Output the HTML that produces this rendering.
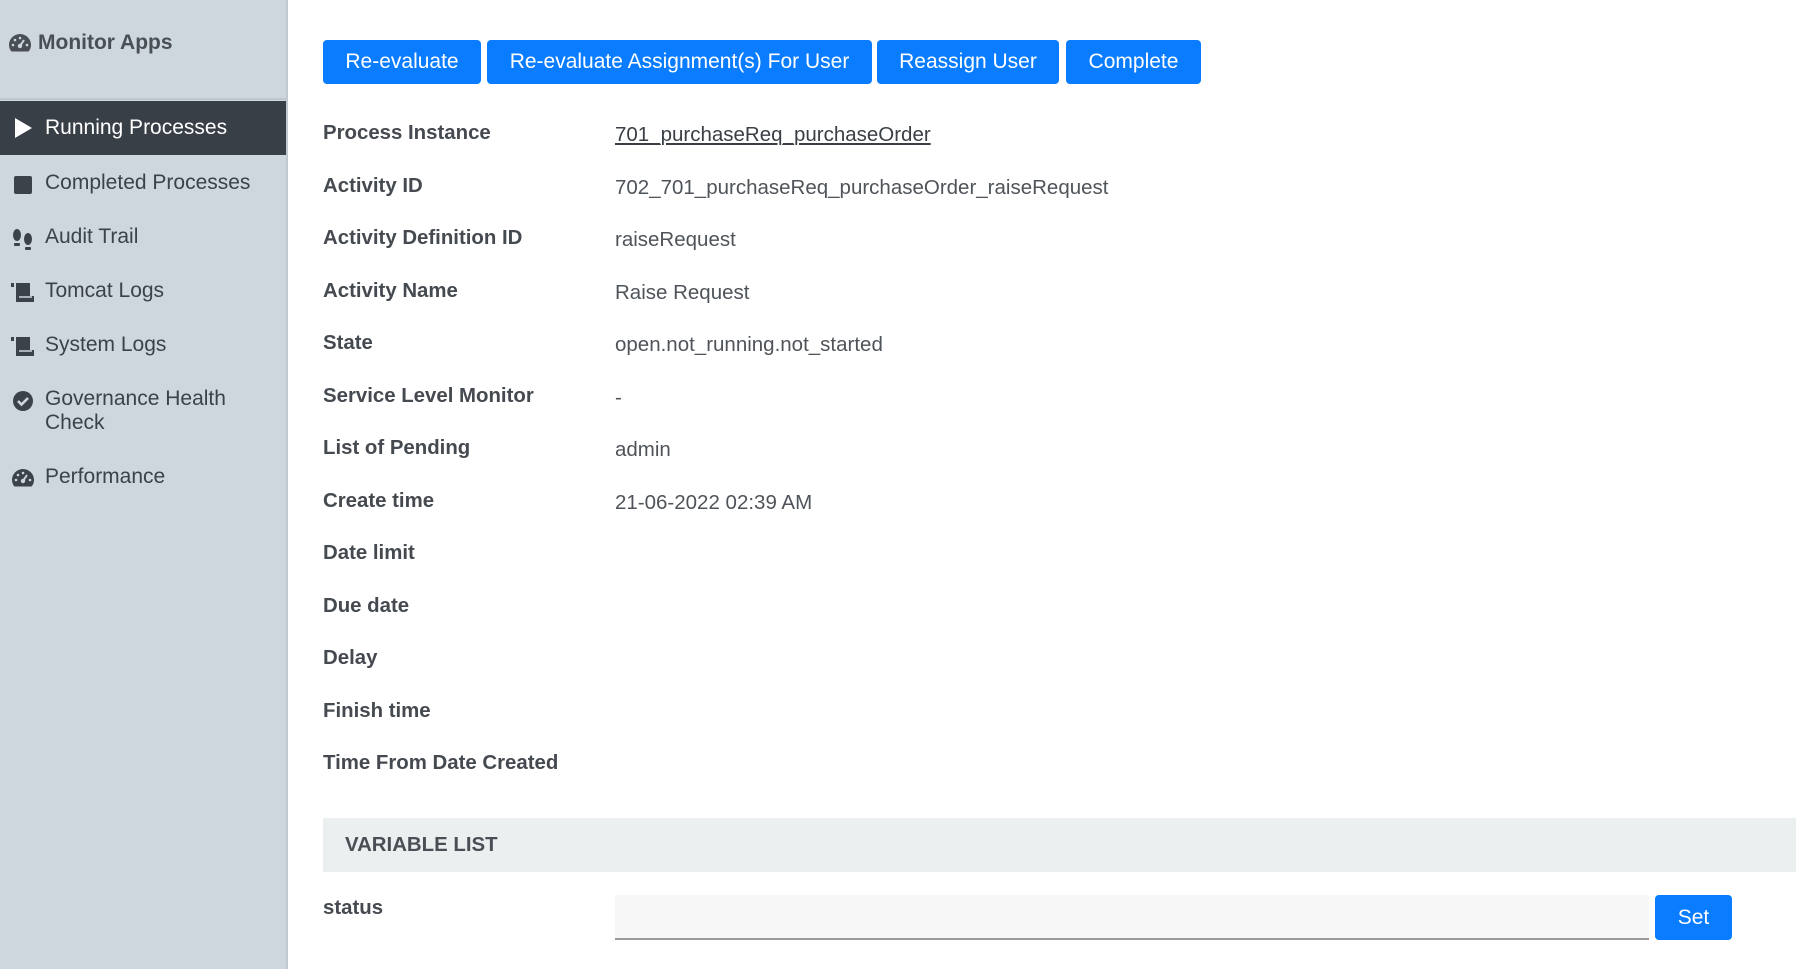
<!DOCTYPE html>
<html><head><meta charset="utf-8"><style>
*{margin:0;padding:0;box-sizing:border-box}
body{width:1796px;height:969px;overflow:hidden;font-family:"Liberation Sans",Arial,sans-serif;background:#fff;position:relative}
#side{position:absolute;left:0;top:0;width:288px;height:969px;background:#ced6de;border-right:2px solid #c2c8cf}
.brand{position:absolute;left:8px;top:31px;font-size:21px;font-weight:bold;color:#4a4f55;display:flex;align-items:center;gap:6px}
.sep{position:absolute;left:0;top:98px;width:286px;height:2px;background:#bfc6cd}
.item{position:absolute;left:0;width:286px;font-size:21px;color:#3c4249;display:flex;align-items:flex-start}
.item .ic{width:45px;display:flex;justify-content:center;padding-top:3px}
.active{background:#383f47;color:#fff;height:54px;top:101px;align-items:center}
.active .ic{padding-top:0}
.btn{position:absolute;top:40px;height:44px;background:#0a7cff;color:#fff;border-radius:4px;font-size:21px;display:flex;align-items:center;justify-content:center}
.lbl{position:absolute;left:323px;font-size:20.4px;font-weight:bold;color:#454a50}
.val{position:absolute;left:615px;font-size:20.5px;color:#4f545a}
</style></head><body>
<div id="side">
 <div class="brand"><svg width="24" height="20" viewBox="0 0 24 20"><path d="M12 1A11 11 0 0 0 1 12c0 2.6 1 5 2.5 6.5h17C22 17 23 14.6 23 12A11 11 0 0 0 12 1z" fill="#4a4f55"/><circle cx="12" cy="13" r="2.2" fill="#ced6de"/><path d="M12 13l4-6" stroke="#ced6de" stroke-width="2"/><circle cx="5" cy="12" r="1.3" fill="#ced6de"/><circle cx="7" cy="7" r="1.3" fill="#ced6de"/><circle cx="12" cy="5" r="1.3" fill="#ced6de"/><circle cx="19" cy="12" r="1.3" fill="#ced6de"/></svg>Monitor Apps</div>
 <div class="sep"></div>
 <div class="item active"><div class="ic"><svg width="20" height="22" viewBox="0 0 20 22"><path d="M2 1l17 10L2 21z" fill="#fff"/></svg></div>Running Processes</div>
 <div class="item" style="top:171px"><div class="ic"><div style="width:18px;height:18px;background:#3c4249;border-radius:2px;margin-top:2px"></div></div>Completed Processes</div>
 <div class="item" style="top:225px"><div class="ic"><svg width="24" height="24" viewBox="0 0 24 24"><ellipse cx="6" cy="7" rx="4" ry="6" fill="#3c4249"/><rect x="3" y="15" width="6" height="3" rx="1" fill="#3c4249"/><ellipse cx="17" cy="11" rx="4" ry="6" fill="#3c4249"/><rect x="14" y="19" width="6" height="3" rx="1" fill="#3c4249"/></svg></div>Audit Trail</div>
 <div class="item" style="top:279px"><div class="ic"><svg width="26" height="22" viewBox="0 0 26 22"><rect x="1" y="1" width="3" height="4" fill="#3c4249"/><path d="M6 1h14v13H6z" fill="#3c4249"/><path d="M6 14v6h18v-6z" fill="#3c4249"/><path d="M9 15h13" stroke="#ced6de" stroke-width="1.5"/></svg></div>Tomcat Logs</div>
 <div class="item" style="top:333px"><div class="ic"><svg width="26" height="22" viewBox="0 0 26 22"><rect x="1" y="1" width="3" height="4" fill="#3c4249"/><path d="M6 1h14v13H6z" fill="#3c4249"/><path d="M6 14v6h18v-6z" fill="#3c4249"/><path d="M9 15h13" stroke="#ced6de" stroke-width="1.5"/></svg></div>System Logs</div>
 <div class="item" style="top:387px;line-height:24px"><div class="ic"><svg width="22" height="22" viewBox="0 0 22 22"><circle cx="11" cy="11" r="10" fill="#3c4249"/><path d="M6 11l3.5 3.5L16 8" stroke="#ced6de" stroke-width="2.6" fill="none"/></svg></div><div>Governance Health<br>Check</div></div>
 <div class="item" style="top:465px"><div class="ic"><svg width="24" height="20" viewBox="0 0 24 20"><path d="M12 1A11 11 0 0 0 1 12c0 2.6 1 5 2.5 6.5h17C22 17 23 14.6 23 12A11 11 0 0 0 12 1z" fill="#3c4249"/><circle cx="12" cy="13" r="2.2" fill="#ced6de"/><path d="M12 13l4-6" stroke="#ced6de" stroke-width="2"/><circle cx="5" cy="12" r="1.3" fill="#ced6de"/><circle cx="7" cy="7" r="1.3" fill="#ced6de"/><circle cx="12" cy="5" r="1.3" fill="#ced6de"/><circle cx="19" cy="12" r="1.3" fill="#ced6de"/></svg></div>Performance</div>
</div>

<div class="btn" style="left:323px;width:158px">Re-evaluate</div>
<div class="btn" style="left:487px;width:385px">Re-evaluate Assignment(s) For User</div>
<div class="btn" style="left:877px;width:182px">Reassign User</div>
<div class="btn" style="left:1066px;width:135px">Complete</div>

<div class="lbl" style="top:122px">Process Instance</div><div class="val" style="top:123px;text-decoration:underline;color:#3a3f45">701_purchaseReq_purchaseOrder</div>
<div class="lbl" style="top:175px">Activity ID</div><div class="val" style="top:176px">702_701_purchaseReq_purchaseOrder_raiseRequest</div>
<div class="lbl" style="top:227px">Activity Definition ID</div><div class="val" style="top:228px">raiseRequest</div>
<div class="lbl" style="top:280px">Activity Name</div><div class="val" style="top:281px">Raise Request</div>
<div class="lbl" style="top:332px">State</div><div class="val" style="top:333px">open.not_running.not_started</div>
<div class="lbl" style="top:385px">Service Level Monitor</div><div class="val" style="top:386px">-</div>
<div class="lbl" style="top:437px">List of Pending</div><div class="val" style="top:438px">admin</div>
<div class="lbl" style="top:490px">Create time</div><div class="val" style="top:491px">21-06-2022 02:39 AM</div>
<div class="lbl" style="top:542px">Date limit</div>
<div class="lbl" style="top:595px">Due date</div>
<div class="lbl" style="top:647px">Delay</div>
<div class="lbl" style="top:700px">Finish time</div>
<div class="lbl" style="top:752px">Time From Date Created</div>

<div style="position:absolute;left:323px;top:818px;width:1473px;height:54px;background:#ebeff0"></div>
<div style="position:absolute;left:345px;top:834px;font-size:20.4px;font-weight:bold;color:#4a4f55">VARIABLE LIST</div>
<div class="lbl" style="top:897px">status</div>
<div style="position:absolute;left:615px;top:895px;width:1034px;height:45px;background:#f7f7f7;border-bottom:2px solid #9a9a9a"></div>
<div class="btn" style="left:1655px;top:895px;width:77px;height:45px">Set</div>
</body></html>
